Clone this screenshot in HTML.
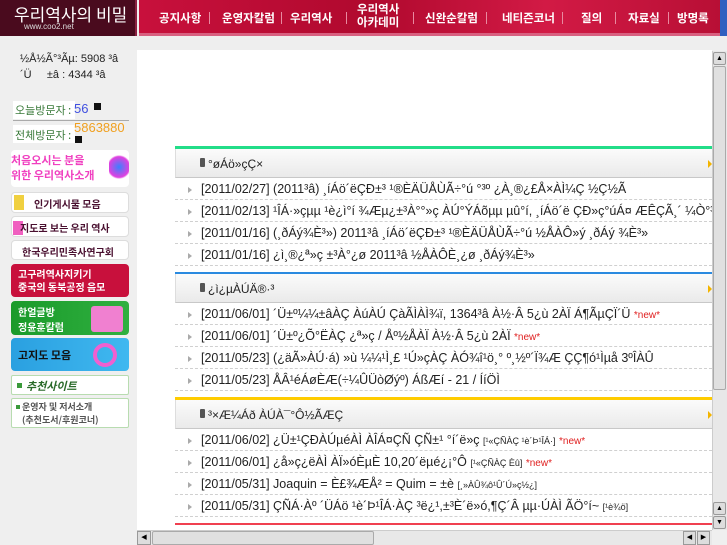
<!DOCTYPE html>
<html><head><meta charset="utf-8"><style>
*{margin:0;padding:0;box-sizing:border-box}
body{width:727px;height:545px;overflow:hidden;background:#efefef;font-family:"Liberation Sans","DejaVu Sans","Noto Sans CJK KR",sans-serif;position:relative}
.a{position:absolute}
.k{font-family:"Noto Sans CJK KR","NanumGothic",sans-serif;font-weight:bold}
#logo{left:0;top:0;width:137px;height:36px;background:#4a0b1e;border-right:2px solid #8a2040}
#nav{left:139px;top:0;width:581px;height:36px;background:linear-gradient(90deg,#c8103c,#b0092e 40%,#d21a45 70%,#b80f35);border-bottom:3px solid #d86080}
#nav span{position:absolute;color:#fff;font-size:11.5px;top:10px}
.sep{position:absolute;top:12px;width:1px;height:12px;background:#e88aa0}
.sec{left:175px;width:537px}
.hd{height:29px;background:linear-gradient(#fbfbfb,#eaeaea);border-bottom:1px solid #c8c8c8;border-left:1px solid #ddd;font-size:12px;color:#222;padding:8px 0 0 22px;position:relative}
.hd:before{content:"";position:absolute;left:24px;top:9px;width:5px;height:9px;background:#555;border-radius:1px}
.hd b{font-weight:normal;margin-left:10px}
.hd:after{content:"";position:absolute;right:0;top:11px;border-left:4px solid #f3b400;border-top:4px solid transparent;border-bottom:4px solid transparent}
.row{height:22px;border-bottom:1px dashed #d0d0d0;font-size:12.5px;color:#222;padding:4px 0 0 26px;position:relative;white-space:nowrap;overflow:hidden;margin-left:0}
.row:before{content:"";position:absolute;left:13px;top:9px;border-left:4px solid #aaa;border-top:3px solid transparent;border-bottom:3px solid transparent}
.new{color:#e02020;font-size:10px}
.sm{font-size:9px}
.lb{position:absolute;left:11px;width:118px;border-radius:4px}
</style></head><body>
<div class="a" id="logo"><div class="a k" style="left:14px;top:1px;color:#fff;font-size:17px;font-weight:normal">우리역사의 비밀</div><div class="a" style="left:24px;top:22px;color:#ddd;font-size:8px">www.coo2.net</div></div>
<div class="a" id="nav">
<span class="k" style="left:20px">공지사항</span><div class="sep" style="left:70px"></div>
<span class="k" style="left:83px">운영자칼럼</span><div class="sep" style="left:142px"></div>
<span class="k" style="left:151px">우리역사</span><div class="sep" style="left:207px"></div>
<span class="k" style="left:218px;top:3px;line-height:13px;text-align:center">우리역사<br>아카데미</span><div class="sep" style="left:274px"></div>
<span class="k" style="left:286px">신완순칼럼</span><div class="sep" style="left:347px"></div>
<span class="k" style="left:363px">네티즌코너</span><div class="sep" style="left:423px"></div>
<span class="k" style="left:442px">질의</span><div class="sep" style="left:476px"></div>
<span class="k" style="left:489px">자료실</span><div class="sep" style="left:529px"></div>
<span class="k" style="left:538px">방명록</span>
</div>
<div class="a" style="left:720px;top:0;width:7px;height:36px;background:#3060c0"></div>
<div class="a" style="left:0;top:39px;width:727px;height:11px;background:#eee"></div>

<!-- sidebar -->
<div class="a" style="left:20px;top:51px;font-size:11px;color:#222;line-height:16px">½Å½Ã°³Ãµ: 5908 ³â<br>´Ü &nbsp; &nbsp; ±â : 4344 ³â</div>
<div class="a" style="left:13px;top:101px;width:62px;height:18px;background:#fff"></div>
<div class="a k" style="left:15px;top:102px;font-size:11px;color:#3a7a3a;font-weight:normal">오늘방문자 :</div>
<div class="a" style="left:74px;top:101px;font-size:13px;color:#4050e0">56</div><div class="a" style="left:94px;top:103px;width:7px;height:7px;background:#111"></div>
<div class="a" style="left:13px;top:120px;width:116px;height:1px;background:#aaa"></div>
<div class="a" style="left:13px;top:125px;width:62px;height:18px;background:#fff"></div>
<div class="a k" style="left:15px;top:127px;font-size:11px;color:#3a7a3a;font-weight:normal">전체방문자 :</div>
<div class="a" style="left:74px;top:120px;font-size:13px;color:#f0a020">5863880</div><div class="a" style="left:75px;top:136px;width:7px;height:7px;background:#111"></div>
<div class="lb" style="top:150px;height:37px;background:#fff"><div class="a k" style="left:0;top:3px;font-size:11px;color:#f040c0;line-height:15px">처음오시는 분을<br>위한 우리역사소개</div><div class="a" style="left:98px;top:3px;width:20px;height:28px;background:radial-gradient(circle,#3a80ff,#e040e0 60%,#fff 70%)"></div></div>
<div class="lb" style="top:192px;height:21px;background:#fff;border:1px solid #ddd"><div class="a" style="left:2px;top:2px;width:10px;height:15px;background:#f0d040"></div><div class="a k" style="left:22px;top:3px;font-size:10px;color:#4a1030">인기게시물 모음</div></div>
<div class="lb" style="top:216px;height:21px;background:#fff;border:1px solid #ddd"><div class="a" style="left:1px;top:4px;width:10px;height:14px;background:#f060c0"></div><div class="a k" style="left:8px;top:3px;font-size:10px;color:#4a1030">지도로 보는 우리 역사</div></div>
<div class="lb" style="top:240px;height:20px;background:#fff;border:1px solid #ddd"><div class="a k" style="left:10px;top:3px;font-size:10px;color:#4a1030">한국우리민족사연구회</div></div>
<div class="lb" style="top:264px;height:33px;background:#c8103c"><div class="a k" style="left:7px;top:3px;font-size:10px;color:#fff;line-height:13px">고구려역사지키기<br>중국의 동북공정 음모</div></div>
<div class="lb" style="top:301px;height:34px;background:linear-gradient(90deg,#1a9a2a,#30b040)"><div class="a k" style="left:7px;top:3px;font-size:10px;color:#fff;line-height:15px">한얼글방<br>정윤훈칼럼</div><div class="a" style="left:80px;top:5px;width:32px;height:26px;background:#f080d0;border-radius:3px"></div></div>
<div class="lb" style="top:338px;height:33px;background:linear-gradient(90deg,#2aa0e0,#40b8f0)"><div class="a k" style="left:7px;top:9px;font-size:11px;color:#111">고지도 모음</div><div class="a" style="left:82px;top:5px;width:24px;height:24px;border:4px solid #f060d0;border-radius:50%"></div></div>
<div class="lb" style="top:375px;height:20px;background:#fff;border:1px solid #b8dcb0;border-radius:2px"><div class="a" style="left:5px;top:7px;width:5px;height:5px;background:#3a9a3a"></div><div class="a k" style="left:14px;top:2px;font-size:11px;color:#2a6a2a;font-style:italic">추천사이트</div></div>
<div class="lb" style="top:398px;height:30px;background:#fff;border:1px solid #b8dcb0;border-radius:2px"><div class="a" style="left:4px;top:6px;width:4px;height:4px;background:#3a9a3a"></div><div class="a k" style="left:10px;top:1px;font-size:9px;color:#555;line-height:13px">운영자 및 저서소개<br>(추천도서/후원코너)</div></div>

<!-- main -->
<div class="a" style="left:137px;top:50px;width:575px;height:480px;background:#fff"></div>
<div class="a sec" style="top:146px;height:3px;background:#22dd88"></div>
<div class="a sec" style="top:149px"><div class="hd"><b>°øÁö»çÇ×</b></div>
<div class="row">[2011/02/27] (2011³â) ¸íÁö´ëÇÐ±³ ¹®ÈÄÜÅÙÃ÷°ú °³º ¿À¸®¿£Å×ÀÌ¼Ç ½Ç½Ã</div>
<div class="row">[2011/02/13] ¹ÎÁ·»çµµ ¹è¿ì°í ¾Æµ¿±³À°°»ç ÀÚ°ÝÁõµµ µû°í, ¸íÁö´ë ÇÐ»ç°úÁ¤ ÆÊÇÃ¸´ ¼Ò°³</div>
<div class="row">[2011/01/16] (¸ðÁý¾È³») 2011³â ¸íÁö´ëÇÐ±³ ¹®ÈÄÜÅÙÃ÷°ú ½ÅÀÔ»ý ¸ðÁý ¾È³»</div>
<div class="row">[2011/01/16] ¿ì¸®¿ª»ç ±³À°¿ø 2011³â ½ÅÀÔÈ¸¿ø ¸ðÁý¾È³»</div></div>
<div class="a sec" style="top:272px;height:2px;background:#2a8ae0"></div>
<div class="a sec" style="top:274px"><div class="hd"><b>¿ì¿µÀÚÄ®·³</b></div>
<div class="row">[2011/06/01] ´Ü±º¼¼±âÀÇ ÀúÀÚ ÇàÃÌÀÌ¾ï, 1364³â À½·Â 5¿ù 2ÀÏ Á¶ÃµÇÏ´Ü <span class="new">*new*</span></div>
<div class="row">[2011/06/01] ´Ü±º¿Õ°ËÀÇ ¿ª»ç / Åº½ÅÀÏ À½·Â 5¿ù 2ÀÏ <span class="new">*new*</span></div>
<div class="row">[2011/05/23] (¿äÃ»ÀÚ·á) »ù ¼¼¹Ì¸£ ¹Ú»çÀÇ ÀÓ¾î¹ö¸° º¸½º´Ï¾Æ ÇÇ¶ó¹Ìµå 3ºÎÀÛ</div>
<div class="row">[2011/05/23] ÅÂ¹éÁøÈÆ(÷¼ÛÜòØýº) ÁßÆí - 21 / ÍíÖÌ</div></div>
<div class="a sec" style="top:397px;height:3px;background:#ffcc00"></div>
<div class="a sec" style="top:400px"><div class="hd"><b>³×Æ¼Áð ÀÚÀ¯°Ô½ÃÆÇ</b></div>
<div class="row">[2011/06/02] ¿Ü±¹ÇÐÀÚµéÀÌ ÀÎÁ¤ÇÑ ÇÑ±¹ °í´ë»ç <span class="sm">[¹«ÇÑÀÇ ¹è´Þ¹ÎÁ·]</span> <span class="new">*new*</span></div>
<div class="row">[2011/06/01] ¿å»ç¿ëÀÌ ÀÏ»óÈµÈ 10,20´ëµé¿¡°Ô <span class="sm">[¹«ÇÑÀÇ Èû]</span> <span class="new">*new*</span></div>
<div class="row">[2011/05/31] Joaquin = È£¾ÆÅ² = Quim = ±è <span class="sm">[¸»ÀÛ¾ô¹Û´Ú»ç½¿]</span></div>
<div class="row">[2011/05/31] ÇÑÁ·Àº ´ÜÁö ¹è´Þ¹ÎÁ·ÀÇ ³ë¿¹,±³È´ë»ó,¶Ç´Â µµ·ÚÀÌ ÃÖ°í~ <span class="sm">[¹è¾ö]</span></div></div>
<div class="a sec" style="top:523px;height:2px;background:#f04050"></div>

<!-- scrollbars -->
<div class="a" style="left:712px;top:51px;width:15px;height:479px;background:#e8e8e8;border-left:1px solid #ccc"></div>
<div class="a" style="left:713px;top:52px;width:13px;height:13px;background:#ddd;border:1px solid #999;border-radius:2px;font-size:7px;text-align:center;line-height:11px">▲</div>
<div class="a" style="left:713px;top:66px;width:13px;height:324px;background:#e0e0e0;border:1px solid #aaa;border-radius:2px"></div>
<div class="a" style="left:713px;top:502px;width:13px;height:13px;background:#ddd;border:1px solid #999;border-radius:2px;font-size:7px;text-align:center;line-height:11px">▲</div>
<div class="a" style="left:713px;top:516px;width:13px;height:13px;background:#ddd;border:1px solid #999;border-radius:2px;font-size:7px;text-align:center;line-height:11px">▼</div>
<div class="a" style="left:137px;top:530px;width:575px;height:15px;background:#e8e8e8;border-top:1px solid #ccc"></div>
<div class="a" style="left:137px;top:531px;width:14px;height:14px;background:#ddd;border:1px solid #999;font-size:7px;text-align:center;line-height:12px">◀</div>
<div class="a" style="left:152px;top:531px;width:222px;height:14px;background:#e0e0e0;border:1px solid #aaa;border-radius:2px"></div>
<div class="a" style="left:683px;top:531px;width:13px;height:14px;background:#ddd;border:1px solid #999;font-size:7px;text-align:center;line-height:12px">◀</div>
<div class="a" style="left:697px;top:531px;width:13px;height:14px;background:#ddd;border:1px solid #999;font-size:7px;text-align:center;line-height:12px">▶</div>
</body></html>
